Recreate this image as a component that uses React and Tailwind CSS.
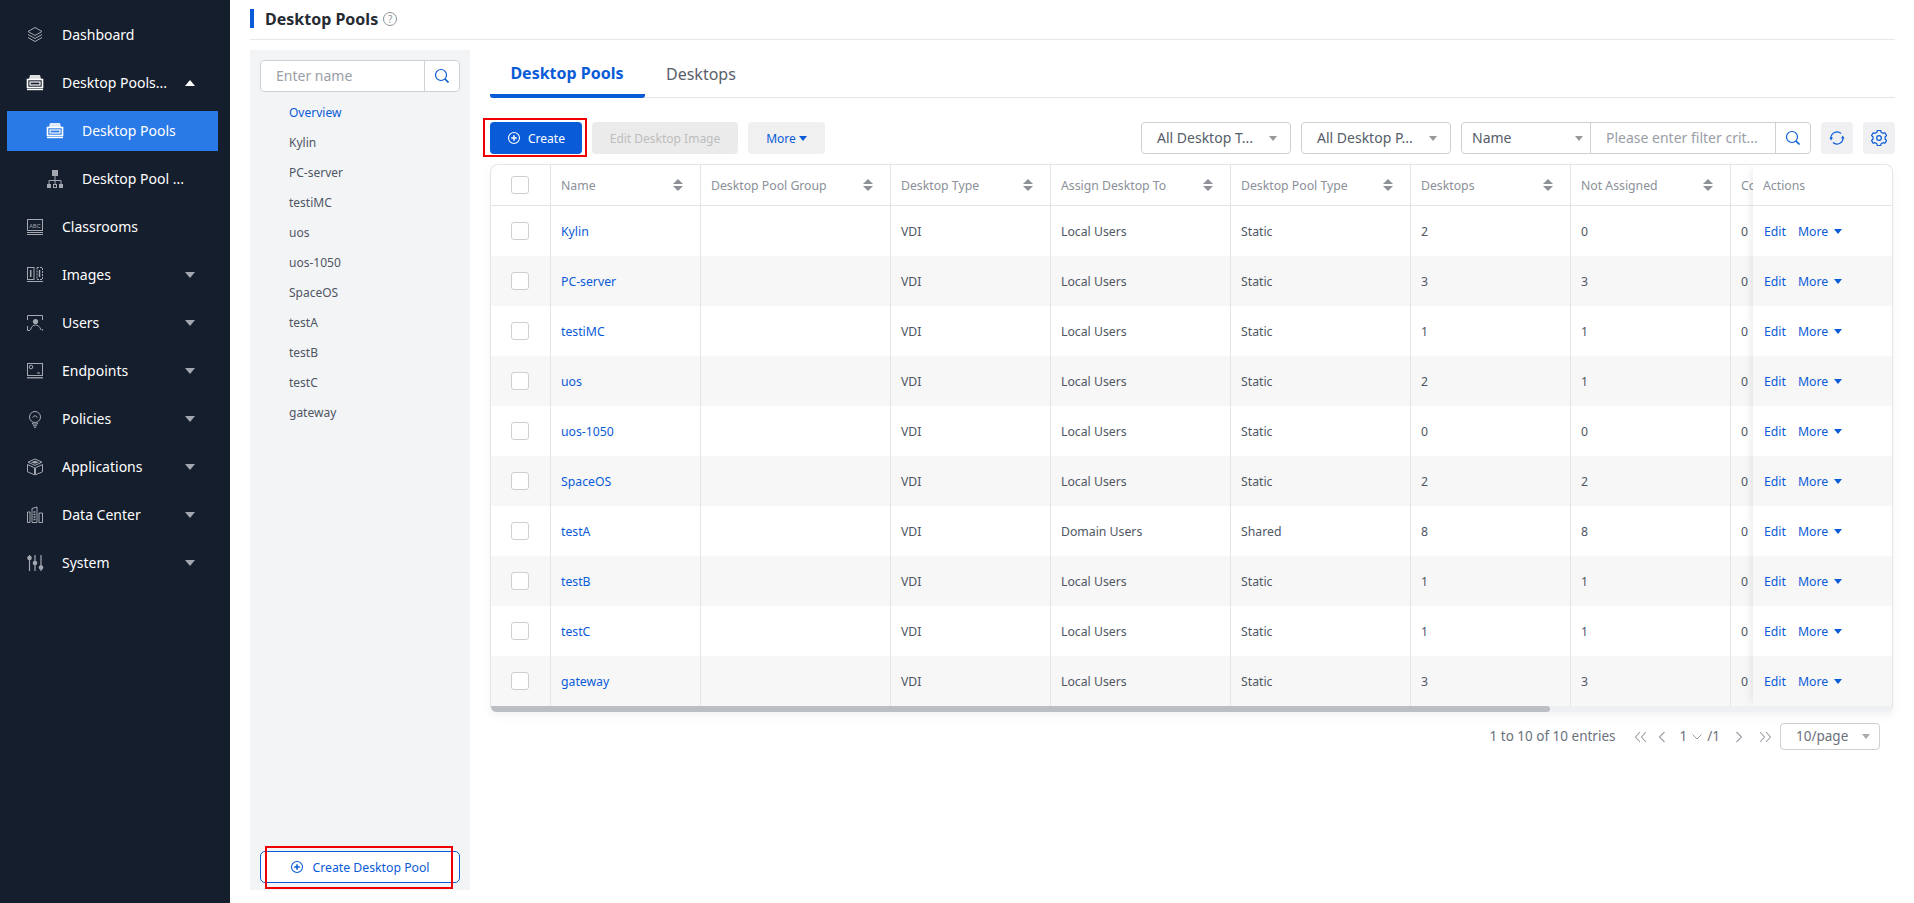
import React from "react";

const rows = [
  ["Kylin", "Local Users", "Static", "2", "0"],
  ["PC-server", "Local Users", "Static", "3", "3"],
  ["testiMC", "Local Users", "Static", "1", "1"],
  ["uos", "Local Users", "Static", "2", "1"],
  ["uos-1050", "Local Users", "Static", "0", "0"],
  ["SpaceOS", "Local Users", "Static", "2", "2"],
  ["testA", "Domain Users", "Shared", "8", "8"],
  ["testB", "Local Users", "Static", "1", "1"],
  ["testC", "Local Users", "Static", "1", "1"],
  ["gateway", "Local Users", "Static", "3", "3"],
];

const treeItems = ["Kylin", "PC-server", "testiMC", "uos", "uos-1050", "SpaceOS", "testA", "testB", "testC", "gateway"];

const Svg = ({ children, className = "" }) => (
  <svg viewBox="0 0 18 18" width="18" height="18" fill="none" stroke="currentColor" strokeWidth="1" className={className}>
    {children}
  </svg>
);

const IDash = () => (
  <Svg>
    <path d="M9 1.5 16 5.5 9 9.5 2 5.5Z" />
    <path d="M2 8.5 9 12.5 16 8.5" />
    <path d="M2 11.5 9 15.5 16 11.5" />
  </Svg>
);
const IPool = () => (
  <Svg>
    <path d="M4 1h10l1 4H3Z" fill="currentColor" stroke="none" opacity="0.85" />
    <rect x="1.500" y="5.500" width="15" height="8" strokeWidth="1.600" />
    <rect x="4" y="8" width="10" height="3" strokeWidth="1.200" />
    <path d="M1 15.500h16" strokeWidth="1.400" />
  </Svg>
);
const ITree = () => (
  <Svg>
    <rect x="6" y="0" width="6" height="6" fill="currentColor" stroke="none" />
    <path d="M9 6v5M3 14v-3.500h12V14M9 11v3" />
    <rect x="1" y="14" width="4" height="4" fill="currentColor" stroke="none" />
    <rect x="7.500" y="14.500" width="3" height="3" stroke="currentColor" />
    <rect x="13" y="14" width="4" height="4" fill="currentColor" stroke="none" />
  </Svg>
);
const IClass = () => (
  <Svg>
    <rect x="1.500" y="1.500" width="15" height="11" />
    <text x="9" y="9.500" fontSize="5.500" textAnchor="middle" fill="currentColor" stroke="none" fontFamily="Liberation Sans, sans-serif">ABC</text>
    <path d="M1 14.500h16M1 16.500h16" />
  </Svg>
);
const IImages = () => (
  <Svg>
    <rect x="1.500" y="1.500" width="6.500" height="12" />
    <rect x="11" y="1.500" width="5.500" height="12" strokeDasharray="2 1" />
    <path d="M4.700 4v7M13.500 4v7" strokeWidth="1.500" />
    <path d="M1 15.500h16" />
  </Svg>
);
const IUsers = () => (
  <Svg>
    <path d="M1.500 6V1.500h15V6M1.500 12v4.500H4M16.500 16.500V15" />
    <circle cx="9.500" cy="7.500" r="2.600" fill="currentColor" stroke="none" />
    <path d="M4.500 16c.500-3.500 3-5 5-5s4.500 1.500 5.500 5" />
  </Svg>
);
const IEnd = () => (
  <Svg>
    <rect x="1.500" y="1.500" width="15" height="12" />
    <circle cx="5" cy="5" r="1.800" />
    <path d="M11 11h3" />
    <path d="M1 15.800h16" strokeWidth="1.300" />
  </Svg>
);
const IPolicy = () => (
  <Svg>
    <circle cx="9" cy="7" r="5.500" />
    <path d="M6.500 7.500 9 5.500 11.500 7.500" />
    <path d="M6.500 12.800v1.200h5v-1.200M7 15.800h4" />
    <path d="M8 17.300h2" />
  </Svg>
);
const IApps = () => (
  <Svg>
    <path d="M9 1 16 4.200 9 7.400 2 4.200Z" />
    <path d="M1.500 6.500 8.500 9.800V16.800L1.500 13.800ZM16.500 6.500 9.500 9.800V16.800L16.500 13.800Z" />
    <path d="M5 4.200 9 2.800 13 4.200 9 5.700Z" fill="currentColor" stroke="none" />
  </Svg>
);
const IData = () => (
  <Svg>
    <path d="M1.500 16.500V6h2.500v10.500ZM6 16.500V2.500l5-1.500v15.500ZM13 16.500V7h3.500v9.500Z" />
    <path d="M7.500 6h2M7.500 8.500h2M7.500 11h2M7.500 13.500h2" strokeWidth="1.300" />
  </Svg>
);
const ISys = () => (
  <Svg>
    <path d="M3.500 1v16M9 1v16M15 1v16" strokeWidth="1.200" />
    <circle cx="3.500" cy="4" r="2.300" fill="currentColor" stroke="none" />
    <circle cx="9" cy="9" r="2.300" fill="currentColor" stroke="none" />
    <circle cx="15" cy="13.500" r="2.300" fill="currentColor" stroke="none" />
  </Svg>
);

const navTop = [
  { label: "Dashboard", Icon: IDash },
  { label: "Desktop Pools...", Icon: IPool, up: true, bright: true },
];
const navBottom = [
  { label: "Classrooms", Icon: IClass },
  { label: "Images", Icon: IImages, down: true },
  { label: "Users", Icon: IUsers, down: true },
  { label: "Endpoints", Icon: IEnd, down: true },
  { label: "Policies", Icon: IPolicy, down: true },
  { label: "Applications", Icon: IApps, down: true },
  { label: "Data Center", Icon: IData, down: true },
  { label: "System", Icon: ISys, down: true },
];

const NavItem = ({ label, Icon, up, down, bright }) => (
  <div className="h-12 flex items-center pl-[26px] text-sm text-white">
    <span className={bright ? "w-[36px] text-white" : "w-[36px] text-[#a4a9b1]"}><Icon /></span>
    <span className="flex-1 whitespace-nowrap">{label}</span>
    {up && <span className="mr-[35px] w-0 h-0 border-x-[5px] border-x-transparent border-b-[6px] border-b-white" />}
    {down && <span className="mr-[35px] w-0 h-0 border-x-[5px] border-x-transparent border-t-[6px] border-t-[#a4a9b1]" />}
  </div>
);

const Sort = () => (
  <span className="flex flex-col gap-[2px]">
    <span className="w-0 h-0 border-x-[5px] border-x-transparent border-b-[5px] border-b-[#8d9096]" />
    <span className="w-0 h-0 border-x-[5px] border-x-transparent border-t-[5px] border-t-[#8d9096]" />
  </span>
);

const Check = () => <span className="block w-[18px] h-[18px] rounded-[3px] border border-[#cfcfcf] bg-white" />;

const Caret = ({ className = "" }) => (
  <span className={"inline-block w-0 h-0 border-x-[4px] border-x-transparent border-t-[5px] " + className} />
);

const SearchIcon = ({ className = "" }) => (
  <svg viewBox="0 0 16 16" width="16" height="16" fill="none" stroke="#0a5bd8" strokeWidth="1.200" className={className}>
    <circle cx="7" cy="7" r="5.500" />
    <path d="M11 11l3.500 3.500" strokeWidth="1.700" />
  </svg>
);

const PlusCircle = ({ className = "" }) => (
  <svg viewBox="0 0 14 14" width="14" height="14" fill="none" stroke="currentColor" className={className}>
    <circle cx="7" cy="7" r="5.500" strokeWidth="1.100" />
    <path d="M7 4.200v5.600M4.200 7h5.600" strokeWidth="1.500" />
  </svg>
);

const H = ({ w, label, sort = true }) => (
  <div className={"h-full shrink-0 border-r border-[#e5e5e5] pl-[10px] pr-[17px] flex items-center justify-between " + w}>
    <span className="whitespace-nowrap pt-[3px]">{label}</span>
    {sort && <Sort />}
  </div>
);
const C = ({ w, children, cls = "" }) => (
  <div className={"h-full shrink-0 border-r border-[#e5e5e5] pl-[10px] pt-[2px] flex items-center " + w + " " + cls}>{children}</div>
);

const Select = ({ label, w }) => (
  <div className={"h-[32px] rounded-[4px] border border-[#cfcfcf] flex items-center justify-between pl-[15px] pr-[13px] text-sm text-[#555c68] " + w}>
    <span>{label}</span>
    <Caret className="border-x-[4.500px] border-t-[5px] border-t-[#999]" />
  </div>
);

const Chev2 = ({ left }) => (
  <svg viewBox="0 0 14 12" width="14" height="12" fill="none" stroke="#9a9ea6" strokeWidth="1.100">
    <path d={left ? "M6 1 1.500 6 6 11M12 1 7.500 6 12 11" : "M2 1 6.500 6 2 11M8 1 12.500 6 8 11"} />
  </svg>
);
const Chev = ({ left }) => (
  <svg viewBox="0 0 8 12" width="8" height="12" fill="none" stroke="#9a9ea6" strokeWidth="1.100">
    <path d={left ? "M6.500 1 1.500 6 6.500 11" : "M1.500 1 6.500 6 1.500 11"} />
  </svg>
);

export default function App() {
  return (
    <div className="flex h-[903px] w-[1914px] overflow-hidden bg-white font-['Noto_Sans','Noto_Sans_CJK_SC',sans-serif] text-[#4f5664]">
      <aside className="w-[230px] shrink-0 bg-[#151e2d] pt-[11px]">
        {navTop.map((n) => <NavItem key={n.label} {...n} />)}
        <div className="mx-[7px] w-[211px] h-10 mt-1 mb-2 bg-[#2979e6] flex items-center pl-[39px] text-sm text-white">
          <span className="w-[36px] text-white"><IPool /></span>
          <span>Desktop Pools</span>
        </div>
        <div className="h-10 mb-1 flex items-center pl-[46px] text-sm text-white">
          <span className="w-[36px] text-[#a4a9b1]"><ITree /></span>
          <span>Desktop Pool ...</span>
        </div>
        {navBottom.map((n) => <NavItem key={n.label} {...n} />)}
      </aside>

      <main className="flex-1 min-w-0 pl-5 pr-[19px]">
        <header className="h-[40px] border-b border-[#e6e8eb] flex items-center pb-[2px]">
          <span className="w-1 h-[19px] bg-[#0a5bd8]" />
          <h1 className="ml-[11px] text-base font-bold text-[#262b33]">Desktop Pools</h1>
          <span className="ml-[5px] w-[14px] h-[14px] rounded-full border border-[#8e9299] text-[#8e9299] text-[10px] leading-[12px] text-center">?</span>
        </header>

        <div className="flex mt-[10px]">
          <section className="relative w-[220px] h-[840px] bg-[#f3f4f6] flex flex-col px-[10px] pt-[10px] pb-[7px]">
            <div className="h-[32px] flex rounded-[4px] border border-[#cfd1d4] bg-white text-sm text-[#9a9ea6]">
              <span className="flex-1 pl-[15px] flex items-center">Enter name</span>
              <span className="w-[35px] border-l border-[#cfd1d4] flex items-center justify-center"><SearchIcon /></span>
            </div>
            <ul className="mt-[6px] pl-[29px] text-xs leading-[30px]">
              <li className="text-[#0a5bd8]">Overview</li>
              {treeItems.map((t) => <li key={t}>{t}</li>)}
            </ul>
            <button className="mt-auto h-[32px] rounded-[5px] border border-[#0a5bd8] bg-white text-[#0a5bd8] text-[12.25px] flex items-center justify-center gap-[8px]">
              <PlusCircle />
              <span className="pt-[3px]">Create Desktop Pool</span>
            </button>
            <span className="absolute left-[15px] top-[796px] w-[188px] h-[43px] border-2 border-[#f00000]" />
          </section>

          <section className="flex-1 min-w-0 ml-5">
            <div className="h-[48px] border-b border-[#e3e5e8] flex items-start text-base relative">
              <div className="w-[155px] h-[48px] pt-[1px] flex items-center justify-center font-bold text-[#0a5bd8] border-b-[4px] border-[#0a5bd8] rounded-b-[3px]">
                <span className="pr-[1px]">Desktop Pools</span>
              </div>
              <div className="ml-[21px] h-[47px] flex items-center text-[#5a606b]"><span>Desktops</span></div>
            </div>

            <div className="mt-6 h-[32px] flex items-center gap-[10px] text-xs">
              <div className="relative w-[92px] h-[32px] rounded-[4px] bg-[#0a5bd8] text-white flex items-center pl-[17px] gap-[7px]">
                <PlusCircle />
                <span className="pt-[2px]">Create</span>
                <span className="absolute -left-[7px] -top-[4px] w-[104px] h-[39px] border-2 border-[#f00000]" />
              </div>
              <div className="w-[146px] h-[32px] pt-[2px] rounded-[4px] bg-[#ebebeb] text-[#bdbdbd] flex items-center justify-center">Edit Desktop Image</div>
              <div className="w-[77px] h-[32px] pt-[2px] rounded-[4px] bg-[#f0f0f0] text-[#0a5bd8] flex items-center justify-center gap-[3px]">
                More <Caret className="border-t-[#0a5bd8] -mt-[2px]" />
              </div>
              <div className="ml-auto flex items-center gap-[10px]">
                <Select label="All Desktop T..." w="w-[150px]" />
                <Select label="All Desktop P..." w="w-[150px]" />
                <div className="w-[350px] h-[32px] rounded-[4px] border border-[#cfcfcf] flex text-sm">
                  <div className="w-[129px] border-r border-[#cfcfcf] flex items-center justify-between pl-[10px] pr-[7px] text-[#555c68]">
                    <span>Name</span>
                    <Caret className="border-x-[4.500px] border-t-[5px] border-t-[#999]" />
                  </div>
                  <div className="flex-1 pl-[15px] flex items-center text-[#9a9ea6] whitespace-nowrap">Please enter filter crit...</div>
                  <div className="w-[35px] border-l border-[#cfcfcf] flex items-center justify-center"><SearchIcon /></div>
                </div>
                <div className="w-8 h-8 rounded-[4px] bg-[#f0f0f2] flex items-center justify-center">
                  <svg viewBox="0 0 16 16" width="16" height="16" fill="none" stroke="#0a5bd8" strokeWidth="1.200">
                    <path d="M2 8a6 6 0 0 1 10-4.500M14 8a6 6 0 0 1-10 4.500" />
                    <path d="M0.500 7.500h3.500L2 10.500ZM12 8.500h3.500L13.700 5.500Z" fill="#0a5bd8" stroke="none" />
                  </svg>
                </div>
                <div className="w-8 h-8 rounded-[4px] bg-[#f0f0f2] flex items-center justify-center">
                  <svg viewBox="0 0 24 24" width="16" height="16" fill="none" stroke="#0a5bd8" strokeWidth="1.800" strokeLinejoin="round">
                    <path d="M9.500 2h5l.7 3 2.700 1.500 3-.9 2.500 4.300-2.300 2.100v3l2.300 2.100-2.500 4.300-3-.9-2.700 1.500-.7 3h-5l-.7-3-2.700-1.500-3 .9L.8 17.100 3.100 15v-3L.8 9.900l2.500-4.300 3 .9L9 5Z" transform="translate(0 -1.500)" />
                    <circle cx="12" cy="12" r="3.500" />
                  </svg>
                </div>
              </div>
            </div>

            <div className="mt-[10px] mr-[2px] h-[548px] rounded-t-[8px] rounded-b-[6px] border-x border-t border-[#e5e5e5] bg-white overflow-hidden shadow-[0_4px_10px_rgba(0,0,0,0.05)] text-[12.25px] flex flex-col">
              <div className="flex h-[541px]">
                <div className="flex-1 min-w-0 overflow-hidden">
                  <div className="flex h-[41px] border-b border-[#e5e5e5] text-[#8b9099]">
                    <div className="w-[60px] h-full shrink-0 border-r border-[#e5e5e5] pl-[20px] flex items-center"><Check /></div>
                    <H w="w-[150px]" label="Name" />
                    <H w="w-[190px]" label="Desktop Pool Group" />
                    <H w="w-[160px]" label="Desktop Type" />
                    <H w="w-[180px]" label="Assign Desktop To" />
                    <H w="w-[180px]" label="Desktop Pool Type" />
                    <H w="w-[160px]" label="Desktops" />
                    <H w="w-[160px]" label="Not Assigned" />
                    <div className="w-[24px] overflow-hidden pl-[10px] pt-[3px] flex items-center">Co</div>
                  </div>
                  {rows.map((r, i) => (
                    <div key={r[0]} className={i % 2 ? "flex h-[50px] bg-[#f7f7f7]" : "flex h-[50px]"}>
                      <div className="w-[60px] h-full shrink-0 border-r border-[#e5e5e5] pl-[20px] flex items-center"><Check /></div>
                      <C w="w-[150px]" cls="text-[#0a5bd8]">{r[0]}</C>
                      <C w="w-[190px]" />
                      <C w="w-[160px]">VDI</C>
                      <C w="w-[180px]">{r[1]}</C>
                      <C w="w-[180px]">{r[2]}</C>
                      <C w="w-[160px]">{r[3]}</C>
                      <C w="w-[160px]">{r[4]}</C>
                      <div className="pl-[10px] pt-[2px] flex items-center">0</div>
                    </div>
                  ))}
                </div>
                <div className="w-[139px] shrink-0 relative z-10 shadow-[-6px_0_8px_-4px_rgba(0,0,0,0.08)]">
                  <div className="h-[41px] border-b border-[#e5e5e5] pl-[10px] pt-[3px] flex items-center text-[#8b9099] bg-white">Actions</div>
                  {rows.map((r, i) => (
                    <div key={r[0]} className={i % 2 ? "h-[50px] pl-[11px] pt-[2px] flex items-center text-[#0a5bd8] bg-[#f7f7f7]" : "h-[50px] pl-[11px] pt-[2px] flex items-center text-[#0a5bd8] bg-white"}>
                      <span>Edit</span>
                      <span className="ml-[12px]">More</span>
                      <Caret className="ml-[6px] -mt-[2px] border-t-[#0a5bd8]" />
                    </div>
                  ))}
                </div>
              </div>
              <div className="h-[6px] bg-[#eef0f3] shrink-0">
                <div className="w-[1059px] h-full rounded-r-full bg-[#bbbec2]" />
              </div>
            </div>

            <div className="mt-[11px] mr-[15px] h-[27px] flex items-center justify-end text-[13.500px] text-[#6b717c]">
              <span>1 to 10 of 10 entries</span>
              <span className="ml-[18px]"><Chev2 left /></span>
              <span className="ml-[10px]"><Chev left /></span>
              <span className="ml-[14px]">1</span>
              <svg viewBox="0 0 10 6" width="10" height="6" fill="none" stroke="#9a9ea6" strokeWidth="1" className="ml-[5px]"><path d="M.500 .500 5 5 9.500 .500" /></svg>
              <span className="ml-[5px]">/1</span>
              <span className="ml-[15px]"><Chev /></span>
              <span className="ml-[15px]"><Chev2 /></span>
              <div className="ml-[8px] w-[100px] h-[27px] rounded-[4px] border border-[#cfcfcf] flex items-center justify-between pl-[15px] pr-[9px]">
                <span>10/page</span>
                <Caret className="border-t-[#aaa]" />
              </div>
            </div>
          </section>
        </div>
      </main>
    </div>
  );
}
